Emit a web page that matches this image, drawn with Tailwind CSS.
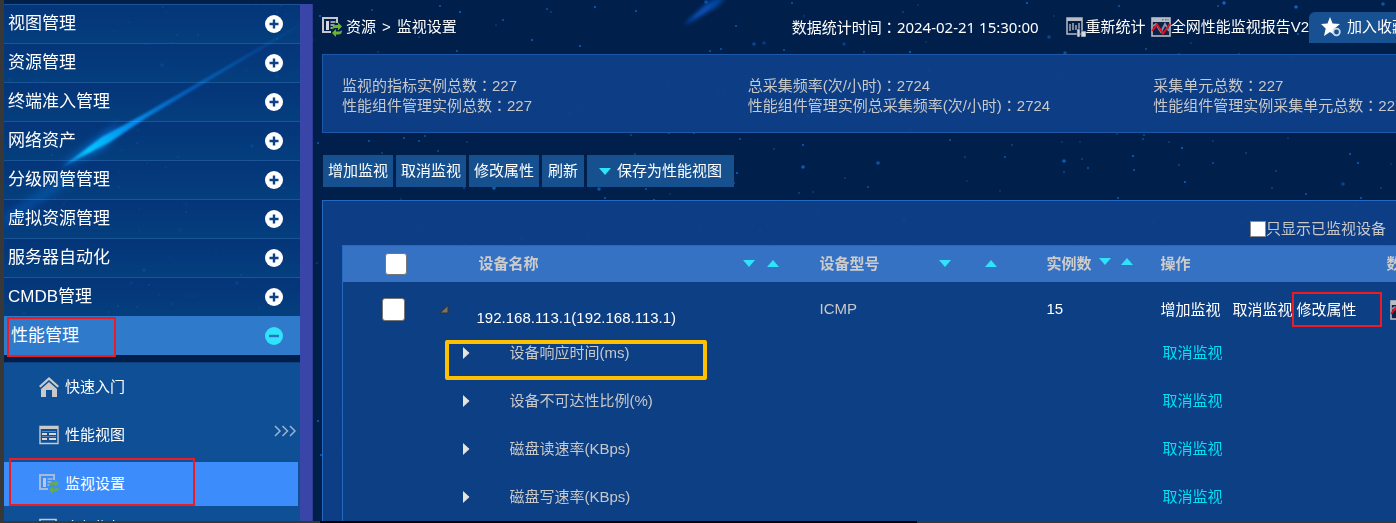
<!DOCTYPE html>
<html lang="zh-CN">

<head>
    <meta charset="UTF-8">
    <meta name="viewport" content="width=device-width, initial-scale=1.0">
    <title>监视设置</title>
    <script src="https://cdn.jsdelivr.net/npm/@tailwindcss/browser@4"></script>
</head>

<body class="relative isolate h-screen flex flex-col overflow-hidden bg-[#001f4b] text-[15px] leading-5 text-white font-['Liberation_Sans','Noto_Sans_CJK_SC',sans-serif]">
    <!-- 星空背景 -->
    <svg class="absolute inset-0 -z-10 w-full h-full" aria-hidden="true">
        <defs>
            <linearGradient id="tail" x1="0" y1="1" x2="1" y2="0">
                <stop offset="0" stop-color="#0a6cf0" />
                <stop offset="1" stop-color="#0a5fd8" stop-opacity=".4" />
            </linearGradient>
            <filter id="soft"><feGaussianBlur stdDeviation="2" /></filter>
        </defs>
        <path d="M684 25 L708 2 L730 -8 L718 6 Z" fill="url(#tail)" filter="url(#soft)" />
        <g id="stars" fill="#0f74dc"></g>
    </svg>

    <!-- 公用图标 -->
    <svg class="hidden" aria-hidden="true">
        <symbol id="i-plus" viewBox="0 0 18 18">
            <circle cx="9" cy="9" r="9" fill="#fff" />
            <path d="M9 4.500v9M4.500 9h9" stroke="#0a4187" stroke-width="2.400" />
        </symbol>
        <symbol id="i-monitor" viewBox="0 0 20 20">
            <path d="M0 0h16v2H0zM0 0h2v16H0zM0 14h9v2H0zM14 0h2v6h-2z" fill="#c4c7cc" />
            <path d="M4 4h3v9H4z" fill="#d5d8dc" />
            <path d="M8.500 5h5M8.500 8h4M8.500 11h2" stroke="#c4c7cc" stroke-width="1.500" />
            <path d="M10 12.500c0-3 1-4.500 4-4.500h2V5.500l4 4-4 4V11h-2c-2 0-3 .5-4 1.500z" fill="#6cb42c" />
            <path d="M20 13c0 3-1 4.500-4 4.500h-2V20l-4-4 4-4v2.500h2c2 0 3-.5 4-1.500z" fill="#6cb42c" />
        </symbol>
        <symbol id="i-report" viewBox="0 0 20 20">
            <rect x="1" y="1" width="18" height="18" fill="#0c2347" stroke="#b9bcc2" stroke-width="1.600" />
            <path d="M1 1h18v4H1z" fill="#b9bcc2" />
            <path d="M11 2.800h1.500M14 2.800h1.500M16.500 2.800h1" stroke="#46536b" />
            <path d="M2 9l3-2 3 5 2 3 4-8 4 7" fill="none" stroke="#7f98b8" stroke-width="1.800" />
            <path d="M1 14l5-6.500 6 9L19 7" fill="none" stroke="#e01420" stroke-width="2" />
        </symbol>
        <symbol id="i-down" viewBox="0 0 12 7"><path d="M0 0h12L6 7z" fill="#2fe3fb" /></symbol>
        <symbol id="i-up" viewBox="0 0 12 7"><path d="M0 7h12L6 0z" fill="#2fe3fb" /></symbol>
        <symbol id="i-right" viewBox="0 0 7 12"><path d="M0 0l6.500 6L0 12z" fill="#e8e4dc" /></symbol>
    </svg>

    <div class="flex flex-1 min-h-0">
        <div class="w-1 shrink-0 bg-[#383838]"></div>

        <!-- 左侧菜单 -->
        <nav class="relative mt-1 w-[296px] shrink-0 overflow-hidden">
            <svg class="absolute left-0 top-0 w-full h-60 mix-blend-screen pointer-events-none" viewBox="0 0 296 240" aria-hidden="true">
                <defs>
                    <linearGradient id="comet" gradientUnits="userSpaceOnUse" x1="56" y1="164" x2="296" y2="22">
                        <stop offset="0" stop-color="#0050c8" />
                        <stop offset=".12" stop-color="#00b8ff" />
                        <stop offset=".3" stop-color="#0070e0" />
                        <stop offset=".5" stop-color="#0060e0" stop-opacity=".6" />
                        <stop offset="1" stop-color="#0060e0" stop-opacity=".1" />
                    </linearGradient>
                    <filter id="glow" x="-20%" y="-20%" width="140%" height="140%"><feGaussianBlur stdDeviation="4" /></filter>
                    <filter id="glow2"><feGaussianBlur stdDeviation="1" /></filter>
                </defs>
                <path d="M54 165L118 118L100 142Z" fill="#0060e0" filter="url(#glow)" />
                <path d="M58 163L98 133L140 110L296 20L296 22L142 114L106 138Z" fill="url(#comet)" filter="url(#glow2)" />
                <path d="M0 212L60 170L70 176L0 222Z" fill="#0058d0" opacity=".35" filter="url(#glow)" />
            </svg>
            <ul class="text-[17px]">
                <li class="h-[39px] border-t border-[#1c5596] bg-linear-to-b from-[#063a85]/80 to-[#05478a]/80"><a href="#" class="h-full flex items-center justify-between pl-1 pr-[17px]">视图管理<svg class="size-[18px]"><use href="#i-plus" /></svg></a></li>
                <li class="h-[39px] border-t border-[#1c5596] bg-linear-to-b from-[#063a85]/80 to-[#05478a]/80"><a href="#" class="h-full flex items-center justify-between pl-1 pr-[17px]">资源管理<svg class="size-[18px]"><use href="#i-plus" /></svg></a></li>
                <li class="h-[39px] border-t border-[#1c5596] bg-linear-to-b from-[#063a85]/80 to-[#05478a]/80"><a href="#" class="h-full flex items-center justify-between pl-1 pr-[17px]">终端准入管理<svg class="size-[18px]"><use href="#i-plus" /></svg></a></li>
                <li class="h-[39px] border-t border-[#1c5596] bg-linear-to-b from-[#063a85]/80 to-[#05478a]/80"><a href="#" class="h-full flex items-center justify-between pl-1 pr-[17px]">网络资产<svg class="size-[18px]"><use href="#i-plus" /></svg></a></li>
                <li class="h-[39px] border-t border-[#1c5596] bg-linear-to-b from-[#063a85]/80 to-[#05478a]/80"><a href="#" class="h-full flex items-center justify-between pl-1 pr-[17px]">分级网管管理<svg class="size-[18px]"><use href="#i-plus" /></svg></a></li>
                <li class="h-[39px] border-t border-[#1c5596] bg-linear-to-b from-[#063a85]/80 to-[#05478a]/80"><a href="#" class="h-full flex items-center justify-between pl-1 pr-[17px]">虚拟资源管理<svg class="size-[18px]"><use href="#i-plus" /></svg></a></li>
                <li class="h-[39px] border-t border-[#1c5596] bg-linear-to-b from-[#063a85]/80 to-[#05478a]/80"><a href="#" class="h-full flex items-center justify-between pl-1 pr-[17px]">服务器自动化<svg class="size-[18px]"><use href="#i-plus" /></svg></a></li>
                <li class="h-[39px] border-t border-[#1c5596] bg-linear-to-b from-[#063a85]/80 to-[#05478a]/80"><a href="#" class="h-full flex items-center justify-between pl-1 pr-[17px]">CMDB管理<svg class="size-[18px]"><use href="#i-plus" /></svg></a></li>
                <li class="relative h-[39px] bg-[#307acb]">
                    <a href="#" class="h-full flex items-center justify-between pl-[7px] pr-[17px]">性能管理
                        <svg class="size-[18px]" viewBox="0 0 18 18"><circle cx="9" cy="9" r="9" fill="#2fe3fb" /><path d="M4 9h10" stroke="#2c72c4" stroke-width="2.400" /></svg>
                    </a>
                    <span class="absolute left-[3px] top-px w-[109px] h-10 border-2 border-[#ed1c24] z-10"></span>
                </li>
            </ul>

            <!-- 二级菜单 -->
            <ul class="mt-[7px] border-t border-[#0d4080] bg-[#0f4f96] text-[15px]">
                <li><a href="#" class="h-12 flex items-center gap-[6px] pl-[35px]">
                    <svg class="size-5" viewBox="0 0 20 20" fill="#c9c9c9"><path d="M10 0l10 9-1.500 1.500L10 3 1.500 10.500 0 9z" /><path d="M10 5l8 7v8h-5v-7H7v7H2v-8z" /></svg>快速入门</a></li>
                <li><a href="#" class="h-12 flex items-center gap-[6px] pl-[35px] pr-1">
                    <svg class="size-5" viewBox="0 0 20 20"><path d="M1 1.500h18v17H1z" fill="none" stroke="#c9c9c9" stroke-width="1.400" /><path d="M1 1h18v3H1z" fill="#c9c9c9" /><path d="M3 9h5M10 9h7M3 14h5M10 14h7" stroke="#d8d8d8" stroke-width="1.800" /><path d="M3 11.500h14M3 6.500h14" stroke="#6f92bb" stroke-width=".8" /></svg>性能视图
                    <svg class="ml-auto w-[22px] h-3 self-start mt-[14px]" viewBox="0 0 22 12" fill="none" stroke="#9ab4d3" stroke-width="1.500"><path d="M1 1l5 5-5 5M8.500 1l5 5-5 5M16 1l5 5-5 5" /></svg></a></li>
                <li class="relative mt-[3px] mr-[2px] bg-[#3c8cfb]">
                    <a href="#" class="h-11 flex items-center gap-[6px] pl-[35px]"><svg class="size-5 opacity-80"><use href="#i-monitor" /></svg>监视设置</a>
                    <span class="absolute left-[5px] -top-1 w-[186px] h-12 border-2 border-[#ed1c24]"></span>
                </li>
                <li><a href="#" class="h-11 flex items-center gap-[6px] pl-[35px]">
                    <svg class="size-5" viewBox="0 0 20 20"><path d="M1 1.500h16v16H1z" fill="none" stroke="#c9c9c9" stroke-width="1.600" /></svg>全部指标</a></li>
            </ul>
        </nav>
        <div class="mt-1 w-[13px] shrink-0 border-r border-[#2e3a94] bg-[#3a45a8]"></div>

        <!-- 右侧内容 -->
        <main class="flex-1 min-w-0 pl-[9px] overflow-hidden">
            <header class="flex items-center h-[54px] min-w-[1110px]">
                <svg class="size-5 mr-1"><use href="#i-monitor" /></svg>
                <a href="#">资源</a><span class="mx-1.5">&gt;</span><span>监视设置</span>
                <div class="ml-auto mr-[5px] flex items-center">
                    <span class="mr-[27px] font-['Noto_Sans','Noto_Sans_CJK_SC',sans-serif]">数据统计时间<span lang="zh-TW" class="font-['Noto_Sans_CJK_TC']">：</span>2024-02-21 15:30:00</span>
                    <a href="#" class="flex items-center mr-[5px]">
                        <svg class="size-5" viewBox="0 0 20 20"><path d="M1 1h15v16H1z" fill="none" stroke="#b9bcc2" stroke-width="1.500" /><path d="M1 1h15v3H1z" fill="#b9bcc2" /><path d="M4 7v7M7 6v7M10 8v5M13 6v6" stroke="#aeb4be" stroke-width="1.400" /><path d="M11 12h3v8h-3zM15 14h5v6h-5z" fill="#d6d8db" stroke="#20365a" stroke-width=".6" /></svg>重新统计</a>
                    <a href="#" class="flex items-center"><svg class="size-5"><use href="#i-report" /></svg>全网性能监视报告V2</a>
                    <button type="button" class="flex items-center gap-[6px] h-[31px] pl-3 pr-5 rounded-tl-md bg-[#185192]">
                        <svg class="size-5" viewBox="0 0 20 20"><path d="M9 0l2.600 6.500L19 7l-5.500 4.500L15 19l-6-4-6 4 1.700-7.500L0 7l6.500-.5z" fill="#fff" /><circle cx="15.500" cy="15" r="3.300" fill="#185192" stroke="#c9d6e8" stroke-width="1.800" /></svg>加入收藏</button>
                </div>
            </header>

            <!-- 统计信息 -->
            <section class="h-[79px] border border-r-0 border-[#1c58a8] bg-[#0e4088]/95 text-[#c8c8c8] leading-[19px] pl-[19px] pt-5 overflow-hidden">
                <div class="grid grid-cols-3 min-w-[1217px]">
                    <p>监视的指标实例总数<span lang="zh-TW" class="font-['Noto_Sans_CJK_TC']">：</span>227<br>性能组件管理实例总数<span lang="zh-TW" class="font-['Noto_Sans_CJK_TC']">：</span>227</p>
                    <p>总采集频率(次/小时)<span lang="zh-TW" class="font-['Noto_Sans_CJK_TC']">：</span>2724<br>性能组件管理实例总采集频率(次/小时)<span lang="zh-TW" class="font-['Noto_Sans_CJK_TC']">：</span>2724</p>
                    <p>采集单元总数<span lang="zh-TW" class="font-['Noto_Sans_CJK_TC']">：</span>227<br>性能组件管理实例采集单元总数<span lang="zh-TW" class="font-['Noto_Sans_CJK_TC']">：</span>227</p>
                </div>
            </section>

            <!-- 操作按钮 -->
            <div class="flex gap-[3px] mt-[22px] ml-px">
                <button type="button" class="h-8 px-[5px] bg-[#16508f]">增加监视</button>
                <button type="button" class="h-8 px-[5px] bg-[#16508f]">取消监视</button>
                <button type="button" class="h-8 px-[5px] bg-[#16508f]">修改属性</button>
                <button type="button" class="h-8 px-1.5 bg-[#16508f]">刷新</button>
                <button type="button" class="h-8 px-3 flex items-center gap-[6px] bg-[#16508f]"><svg class="w-3 h-[7px]"><use href="#i-down" /></svg>保存为性能视图</button>
            </div>

            <!-- 设备列表 -->
            <section class="mt-[13px] h-full pl-[19px] border border-r-0 border-[#2468c0] bg-[#0e4088]/95 text-[#c8c8c8]">
                <div class="h-11 flex items-end justify-end pb-1.5 pr-[10px]">
                    <label class="flex items-center"><input type="checkbox" class="appearance-none size-4 bg-white border border-[#8a8a8a]">只显示已监视设备</label>
                </div>
                <table class="table-fixed w-full min-w-[1120px] border-l border-t border-[#2468c0] bg-[#0d3f84] text-left">
                    <colgroup>
                        <col class="w-[89px]">
                        <col class="w-[388px]">
                        <col class="w-[227px]">
                        <col class="w-[114px]">
                        <col class="w-[226px]">
                        <col>
                    </colgroup>
                    <thead class="bg-[#3672c4] text-[#cccccc]">
                        <tr class="h-9">
                            <th class="pl-[42px]"><input type="checkbox" aria-label="全选" class="block appearance-none size-[22px] rounded-[3px] bg-white border border-[#767676]"></th>
                            <th class="pl-[47px]">
                                <div class="flex items-center">设备名称<svg class="w-3 h-[7px] ml-auto"><use href="#i-down" /></svg><svg class="w-3 h-[7px] ml-3 mr-[41px]"><use href="#i-up" /></svg></div>
                            </th>
                            <th>
                                <div class="flex items-center">设备型号<svg class="w-3 h-[7px] ml-[59px]"><use href="#i-down" /></svg><svg class="w-3 h-[7px] ml-[34px]"><use href="#i-up" /></svg></div>
                            </th>
                            <th>
                                <div class="flex items-center">实例数<svg class="w-3 h-[7px] ml-[7px] mb-1"><use href="#i-down" /></svg><svg class="w-3 h-[7px] ml-[10px] mb-1"><use href="#i-up" /></svg></div>
                            </th>
                            <th>操作</th>
                            <th>数据</th>
                        </tr>
                    </thead>
                    <tbody>
                        <tr class="h-[47px] align-top">
                            <td class="pl-[39px] pt-4"><input type="checkbox" aria-label="选择设备" class="block appearance-none size-[23px] rounded-[3px] bg-white border border-[#767676]"></td>
                            <td class="pt-[26px]">
                                <div class="flex items-start pl-2 text-white">
                                    <svg class="size-[9px] shrink-0 -mt-[3px] mr-[28px]" viewBox="0 0 9 9"><path d="M0 8L8 .5V8z" fill="#77746c" stroke="#33322f" /></svg>
                                    <span class="font-medium">192.168.113.1(192.168.113.1)</span>
                                </div>
                            </td>
                            <td class="pt-[17px]">ICMP</td>
                            <td class="pt-[17px] text-white">15</td>
                            <td class="pt-[18px] text-white whitespace-nowrap">
                                <div class="flex">
                                    <a href="#" class="mr-3">增加监视</a><a href="#" class="mr-1">取消监视</a>
                                    <a href="#" class="relative">修改属性<span class="absolute -left-[5px] -top-2 w-[90px] h-[35px] border-2 border-[#ed1c24]"></span></a>
                                </div>
                            </td>
                            <td class="pt-[18px] pl-[3px]"><svg class="size-5"><use href="#i-report" /></svg></td>
                        </tr>
                        <tr class="h-12">
                            <td></td>
                            <td class="relative pl-[31px]">
                                <div class="flex items-center gap-10"><svg class="w-[7px] h-3"><use href="#i-right" /></svg>设备响应时间(ms)</div>
                                <span class="absolute left-[13px] top-[11px] w-[262px] h-10 border-4 border-[#ffc000] rounded-xs"></span>
                            </td>
                            <td></td>
                            <td></td>
                            <td class="pl-[2px]"><a href="#" class="text-[#00e0f4]">取消监视</a></td>
                            <td></td>
                        </tr>
                        <tr class="h-12">
                            <td></td>
                            <td class="pl-[31px]"><div class="flex items-center gap-10"><svg class="w-[7px] h-3"><use href="#i-right" /></svg>设备不可达性比例(%)</div></td>
                            <td></td>
                            <td></td>
                            <td class="pl-[2px]"><a href="#" class="text-[#00e0f4]">取消监视</a></td>
                            <td></td>
                        </tr>
                        <tr class="h-12">
                            <td></td>
                            <td class="pl-[31px]"><div class="flex items-center gap-10"><svg class="w-[7px] h-3"><use href="#i-right" /></svg>磁盘读速率(KBps)</div></td>
                            <td></td>
                            <td></td>
                            <td class="pl-[2px]"><a href="#" class="text-[#00e0f4]">取消监视</a></td>
                            <td></td>
                        </tr>
                        <tr class="h-12">
                            <td></td>
                            <td class="pl-[31px]"><div class="flex items-center gap-10"><svg class="w-[7px] h-3"><use href="#i-right" /></svg>磁盘写速率(KBps)</div></td>
                            <td></td>
                            <td></td>
                            <td class="pl-[2px]"><a href="#" class="text-[#00e0f4]">取消监视</a></td>
                            <td></td>
                        </tr>
                    </tbody>
                </table>
            </section>
        </main>
    </div>

    <footer class="flex h-[2px] shrink-0 bg-[#383838]"><div class="ml-80 w-[597px] bg-black"></div></footer>

    <script>
        // 生成固定分布的星点
        let seed = 17;
        function rand() {
            seed = (seed * 16807) % 2147483647;
            return seed / 2147483647;
        }

        let html = '';
        for (let i = 0; i < 900; i++) {
            const r = rand() < 0.15 ? 1.8 : 1;
            html += `<circle cx="${(rand() * 1920).toFixed(0)}" cy="${(rand() * 540).toFixed(0)}" r="${r}" opacity="${(0.3 + rand() * 0.6).toFixed(2)}"/>`;
        }
        document.getElementById('stars').innerHTML = html;
    </script>
</body>

</html>
